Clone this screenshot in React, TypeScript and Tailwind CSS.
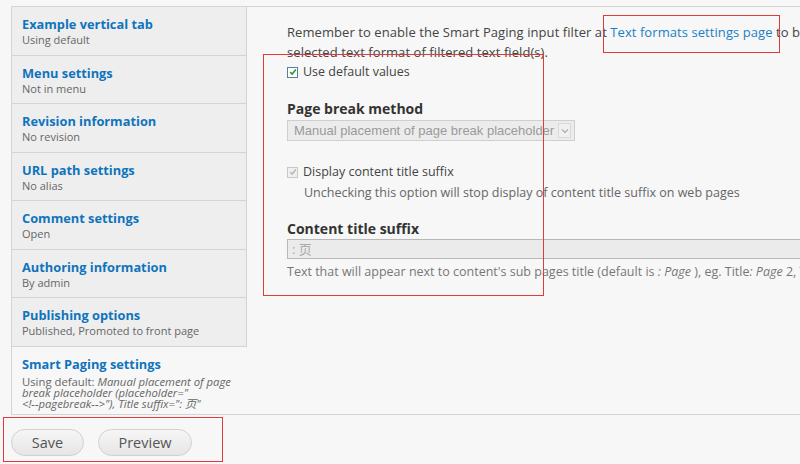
import React from "react";

const tabs = [
  { t: "Example vertical tab", s: "Using default" },
  { t: "Menu settings", s: "Not in menu" },
  { t: "Revision information", s: "No revision" },
  { t: "URL path settings", s: "No alias" },
  { t: "Comment settings", s: "Open" },
  { t: "Authoring information", s: "By admin" },
  { t: "Publishing options", s: "Published, Promoted to front page" },
];

function Check({ disabled }: { disabled?: boolean }) {
  return (
    <span
      className={
        "inline-flex items-center justify-center w-[11px] h-[11px] border mr-[5px] shrink-0 " +
        (disabled ? "border-[#c8c8c8] bg-[#f0f0f0]" : "border-[#5b7da3] bg-white")
      }
    >
      <svg width="8" height="8" viewBox="0 0 10 10">
        <path
          d="M1.5 5.2 L4 7.6 L8.6 2"
          fill="none"
          stroke={disabled ? "#b9b9b9" : "#2c9a2c"}
          strokeWidth="2"
        />
      </svg>
    </span>
  );
}

export default function App() {
  return (
    <div
      className="relative w-[800px] h-[464px] overflow-hidden bg-[#f7f7f7] text-[#444]"
      style={{ fontFamily: '"Open Sans", "Noto Sans CJK SC", sans-serif' }}
    >
      <div className="pl-[11px] pt-[6px]">
        <div className="flex w-[1000px] h-[409px] border-t border-b border-l border-[#d4d4d4]">
          <ul className="w-[235px] shrink-0 flex flex-col bg-[#eeeeee]">
            {tabs.map((x) => (
              <li
                key={x.t}
                className="h-[48.5px] border-b border-r border-[#d4d4d4] pl-[10px] pt-[9px]"
              >
                <div className="text-[12.8px] leading-[16px] font-bold text-[#0f74bc] whitespace-nowrap">{x.t}</div>
                <div className="text-[11px] leading-[16px] text-[#666] whitespace-nowrap">{x.s}</div>
              </li>
            ))}
            <li className="flex-1 bg-[#f7f7f7] pl-[10px] pt-[9px] border-r border-transparent">
              <div className="text-[12.8px] leading-[16px] font-bold text-[#0f74bc] whitespace-nowrap">Smart Paging settings</div>
              <div className="text-[11.3px] leading-[11px] text-[#666] pt-[4px] whitespace-nowrap">
                Using default: <i>Manual placement of page</i>
                <br />
                <i>break placeholder (placeholder="</i>
                <br />
                <i>&lt;!--pagebreak--&gt;"), Title suffix=": 页"</i>
              </div>
            </li>
          </ul>
          <div className="flex-1 pl-[40px] pt-[15px] text-[13px]">
            <p className="leading-[20px] w-[620px] tracking-[0.07px]">
              Remember to enable the Smart Paging input filter at{" "}
              <span className="text-[#1a7fc6]">Text formats settings page</span> to be able to use the
              selected text format of filtered text field(s).
            </p>
            <div className="flex items-center h-[18px] mt-[1px] text-[12.5px]">
              <Check />
              <span>Use default values</span>
            </div>
            <div className="mt-[19px] text-[14px] leading-[18px] font-bold text-[#333]">Page break method</div>
            <div className="mt-[2px] flex w-[288px] h-[21px] border border-[#cfcfcf] bg-[#ececec] items-center">
              <span
                className="flex-1 pl-[6px] text-[13px] text-[#9a9a9a] whitespace-nowrap overflow-hidden"
                style={{ fontFamily: '"Liberation Sans", Arial, sans-serif' }}
              >
                Manual placement of page break placeholder
              </span>
              <span className="w-[13px] h-[15px] mr-[3px] border border-[#d8d8d8] bg-[#f0f0f0] flex items-center justify-center">
                <svg width="8" height="6" viewBox="0 0 8 6">
                  <path d="M1 1.5 L4 4.5 L7 1.5" fill="none" stroke="#aaa" strokeWidth="1.2" />
                </svg>
              </span>
            </div>
            <div className="flex items-center h-[18px] mt-[22px] text-[12.5px]">
              <Check disabled />
              <span>Display content title suffix</span>
            </div>
            <div className="mt-[4px] pl-[17px] text-[12.5px] leading-[16px] text-[#666] whitespace-nowrap">
              Unchecking this option will stop display of content title suffix on web pages
            </div>
            <div className="mt-[19px] text-[14px] leading-[18px] font-bold text-[#333]">Content title suffix</div>
            <div className="mt-[1px] h-[20px] w-[700px] border border-[#b8b8b8] bg-[#ebebeb] pl-[4px] text-[13px] leading-[18px] text-[#aaa]">
              : 页
            </div>
            <div className="mt-[5px] text-[12.5px] leading-[16px] text-[#777] whitespace-nowrap">
              Text that will appear next to content's sub pages title (default is <i>: Page</i> ), eg. Title<i>: Page</i> 2, Title<i>: Page</i> 3
            </div>
          </div>
        </div>
      </div>
      <div className="flex gap-[14px] pl-[11px] pt-[14px]">
        <button className="w-[73px] h-[27px] rounded-full border border-[#d0d0d0] bg-gradient-to-b from-[#f6f6f6] to-[#e6e6e6] text-[14.5px] text-[#555]">
          Save
        </button>
        <button className="w-[94px] h-[27px] rounded-full border border-[#d0d0d0] bg-gradient-to-b from-[#f6f6f6] to-[#e6e6e6] text-[14.5px] text-[#555]">
          Preview
        </button>
      </div>
      <div className="absolute left-[263px] top-[54px] w-[281px] h-[242px] border border-[#e23a3a]" />
      <div className="absolute left-[603px] top-[15px] w-[177px] h-[38px] border border-[#e23a3a]" />
      <div className="absolute left-[3px] top-[417px] w-[220px] h-[45px] border border-[#e23a3a]" />
    </div>
  );
}
